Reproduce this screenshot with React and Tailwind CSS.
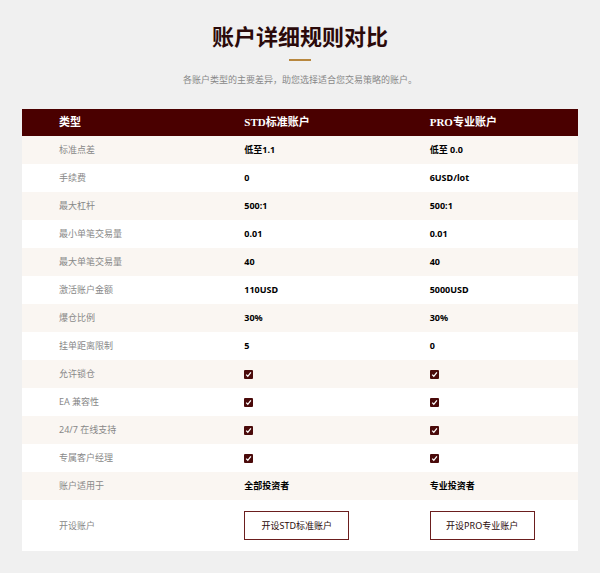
const rows = [
  ["标准点差", "低至1.1", "低至 0.0"],
  ["手续费", "0", "6USD/lot"],
  ["最大杠杆", "500:1", "500:1"],
  ["最小单笔交易量", "0.01", "0.01"],
  ["最大单笔交易量", "40", "40"],
  ["激活账户金额", "110USD", "5000USD"],
  ["爆仓比例", "30%", "30%"],
  ["挂单距离限制", "5", "0"],
  ["允许锁仓", true, true],
  ["EA 兼容性", true, true],
  ["24/7 在线支持", true, true],
  ["专属客户经理", true, true],
  ["账户适用于", "全部投资者", "专业投资者"],
];

function Check() {
  return (
    <svg width="9" height="9" viewBox="0 0 9 9">
      <rect width="9" height="9" rx="1" fill="#4a0a0a" />
      <path d="M2.2 4.6 L3.8 6.3 L6.9 2.4" stroke="#fff" strokeWidth="1.3" fill="none" />
    </svg>
  );
}

function Cell({ v }) {
  if (v === true) return <Check />;
  return <span className="font-bold text-[9px] leading-[12px] text-black">{v}</span>;
}

export default function App() {
  const f = { fontFamily: '"Noto Sans", "Noto Sans CJK SC", sans-serif' };
  return (
    <div className="w-[600px] h-[573px] bg-[#f0f0f0] pt-[22px]" style={f}>
      <h1 className="text-center text-[22px] font-bold leading-[28px] text-[#2b0a0a]">账户详细规则对比</h1>
      <div className="mx-auto mt-[9px] w-[22px] h-[2px] bg-[#b8873e]" />
      <p className="text-center text-[9px] text-[#888] mt-[13px] leading-[12px]">各账户类型的主要差异，助您选择适合您交易策略的账户。</p>
      <div className="mx-[22px] mt-[23px] bg-white">
        <div className="grid grid-cols-3 h-[27px] items-center bg-[#4a0000] text-white text-[11px] font-bold" style={{ fontFamily: '"Liberation Serif", "Noto Sans CJK SC", serif' }}>
          <div className="pl-[37px]">类型</div>
          <div className="pl-[37px]">STD标准账户</div>
          <div className="pl-[37px]">PRO专业账户</div>
        </div>
        {rows.map((r, i) => (
          <div key={i} className={`grid grid-cols-3 h-[28px] ${i % 2 === 0 ? "bg-[#faf6f2]" : "bg-white"}`}>
            <div className="pl-[37px] flex items-center text-[9px] leading-[12px] text-[#888]">{r[0]}</div>
            <div className="pl-[37px] flex items-center"><Cell v={r[1]} /></div>
            <div className="pl-[37px] flex items-center"><Cell v={r[2]} /></div>
          </div>
        ))}
        <div className="grid grid-cols-3 h-[51px]">
          <div className="pl-[37px] flex items-center text-[9px] text-[#888]">开设账户</div>
          <div className="pl-[37px] flex items-center">
            <div className="w-[105px] h-[29px] border border-[#6b1e1e] flex items-center justify-center text-[9px] text-[#2b0a0a]">开设STD标准账户</div>
          </div>
          <div className="pl-[37px] flex items-center">
            <div className="w-[105px] h-[29px] border border-[#6b1e1e] flex items-center justify-center text-[9px] text-[#2b0a0a]">开设PRO专业账户</div>
          </div>
        </div>
      </div>
    </div>
  );
}
